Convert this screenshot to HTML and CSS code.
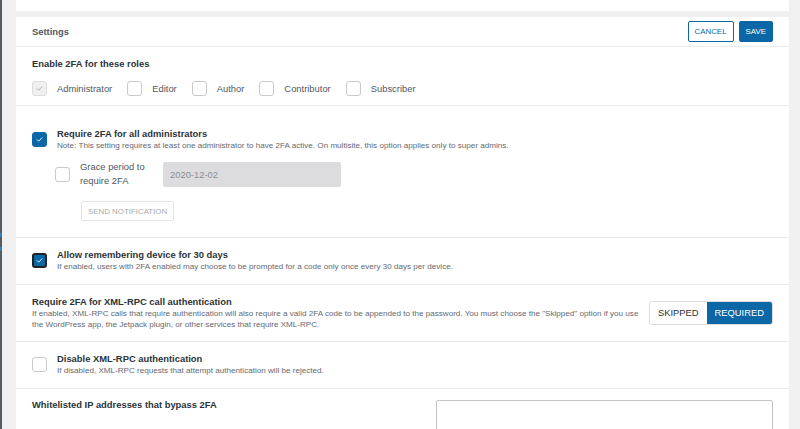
FILE: index.html
```html
<!DOCTYPE html>
<html lang="en">
<head>
<meta charset="utf-8">
<title>Settings</title>
<link rel="stylesheet" href="styles.css">
</head>
<body>
<div class="frame">
  <div class="edge"></div>
  <main class="main">
    <div class="card card-top"></div>
    <div class="card settings">
      <header class="head">
        <span class="head-title">Settings</span>
        <div class="actions">
          <button class="btn btn-outline">Cancel</button>
          <button class="btn btn-primary">Save</button>
        </div>
      </header>

      <section class="sec roles">
        <div class="title">Enable 2FA for these roles</div>
        <div class="role-list">
          <label class="role"><span class="cb cb-disabled"><svg viewBox="0 0 16 16"><path d="M4.5 8.2l2.3 2.3 4.7-5"/></svg></span>Administrator</label>
          <label class="role"><span class="cb"></span>Editor</label>
          <label class="role"><span class="cb"></span>Author</label>
          <label class="role"><span class="cb"></span>Contributor</label>
          <label class="role"><span class="cb"></span>Subscriber</label>
        </div>
      </section>

      <section class="sec admin">
        <div class="opt">
          <span class="cb cb-on"><svg viewBox="0 0 16 16"><path d="M4.5 8.2l2.3 2.3 4.7-5"/></svg></span>
          <div class="opt-text">
            <div class="title">Require 2FA for all administrators</div>
            <div class="desc">Note: This setting requires at least one administrator to have 2FA active. On multisite, this option applies only to super admins.</div>
          </div>
        </div>
        <div class="grace">
          <span class="cb"></span>
          <span class="grace-label">Grace period to<br>require 2FA</span>
          <div class="date-input">2020-12-02</div>
        </div>
        <button class="btn btn-muted">Send notification</button>
      </section>

      <section class="sec">
        <div class="opt">
          <span class="cb cb-on cb-focus"><svg viewBox="0 0 16 16"><path d="M4.5 8.2l2.3 2.3 4.7-5"/></svg></span>
          <div class="opt-text">
            <div class="title">Allow remembering device for 30 days</div>
            <div class="desc">If enabled, users with 2FA enabled may choose to be prompted for a code only once every 30 days per device.</div>
          </div>
        </div>
      </section>

      <section class="sec xmlrpc">
        <div class="opt-text">
          <div class="title">Require 2FA for XML-RPC call authentication</div>
          <div class="desc desc-wrap">If enabled, XML-RPC calls that require authentication will also require a valid 2FA code to be appended to the password. You must choose the "Skipped" option if you use the WordPress app, the Jetpack plugin, or other services that require XML-RPC.</div>
        </div>
        <div class="toggle">
          <span class="seg">SKIPPED</span>
          <span class="seg seg-on">REQUIRED</span>
        </div>
      </section>

      <section class="sec">
        <div class="opt">
          <span class="cb"></span>
          <div class="opt-text">
            <div class="title">Disable XML-RPC authentication</div>
            <div class="desc">If disabled, XML-RPC requests that attempt authentication will be rejected.</div>
          </div>
        </div>
      </section>

      <section class="sec whitelist">
        <div class="title">Whitelisted IP addresses that bypass 2FA</div>
        <div class="textarea"></div>
      </section>
    </div>
  </main>
</div>
</body>
</html>
```

FILE: styles.css
```css
* { box-sizing: border-box; }

html, body {
  margin: 0;
  height: 100%;
  overflow: hidden;
}

body {
  background: #f0f0f1;
  font-family: "Liberation Sans", Arial, sans-serif;
  color: #50575e;
}

.frame {
  display: flex;
  min-height: 100%;
}

.edge {
  width: 2px;
  flex: none;
  background: linear-gradient(to bottom, #555b61 0, #555b61 233px, #2f7fc1 233px, #2f7fc1 237px, #555b61 237px, #555b61 247px, #2f7fc1 247px, #2f7fc1 251px, #555b61 251px);
}

.main {
  flex: 1;
  padding: 0 11px 0 14px;
}

.card {
  background: #fff;
}

.card-top {
  height: 11px;
  margin-bottom: 6px;
}

.head {
  height: 30px;
  display: flex;
  align-items: center;
  justify-content: space-between;
  padding: 0 16px;
  border-bottom: 1px solid #ebebeb;
}

.head-title {
  font-size: 9.4px;
  font-weight: bold;
  color: #50575e;
}

.actions {
  display: flex;
  gap: 5px;
}

.btn {
  font-family: inherit;
  text-transform: uppercase;
  font-size: 7.9px;
  border-radius: 2px;
  height: 21px;
  padding: 0 6px;
  cursor: pointer;
}

.btn-outline {
  background: #fff;
  color: #0b67a5;
  border: 1px solid #0b67a5;
}

.btn-primary {
  background: #0b67a5;
  color: #fff;
  border: 1px solid #0b67a5;
}

.btn-muted {
  background: #fff;
  color: #a7aaad;
  border: 1px solid #e4e4e4;
  height: 20px;
  padding: 0 6px;
  margin: 13px 0 0 49px;
}

.sec {
  padding: 10px 16px 11px;
  border-bottom: 1px solid #ebebeb;
}

.title {
  font-size: 9.4px;
  font-weight: bold;
  line-height: 13px;
  color: #2c3338;
}

.desc {
  font-size: 8.1px;
  line-height: 12px;
  color: #646970;
}

.desc-wrap {
  line-height: 11px;
}

.roles {
  padding-bottom: 9px;
}

.role-list {
  display: flex;
  margin-top: 11px;
}

.role {
  display: flex;
  align-items: center;
  gap: 10px;
  margin-right: 15px;
  font-size: 9.4px;
  color: #50575e;
}

.cb {
  width: 15px;
  height: 15px;
  flex: none;
  border: 1px solid #c9cacc;
  border-radius: 3px;
  background: #fff;
  display: flex;
  align-items: center;
  justify-content: center;
}

.cb svg {
  width: 11px;
  height: 11px;
  fill: none;
  stroke: #fff;
  stroke-width: 1.3;
  stroke-linecap: round;
  stroke-linejoin: round;
}

.cb-disabled {
  background: #f0f0f1;
  border-color: #dcdcde;
}

.cb-disabled svg {
  stroke: #a7aaad;
}

.cb-on {
  background: #0b67a5;
  border-color: #0b67a5;
}

.cb-focus {
  border: 2px solid #1d2327;
}

.opt {
  display: flex;
  align-items: center;
  gap: 10px;
}

.admin {
  padding-top: 21px;
  padding-bottom: 16px;
}

.grace {
  display: flex;
  align-items: center;
  margin: 8px 0 0 23px;
}

.grace-label {
  font-size: 9.4px;
  line-height: 14px;
  color: #50575e;
  margin-left: 10px;
  width: 83px;
}

.date-input {
  width: 178px;
  height: 25px;
  background: #dcdcde;
  border-radius: 2px;
  font-size: 9.4px;
  color: #8c8f94;
  display: flex;
  align-items: center;
  padding-left: 7px;
}

.xmlrpc {
  display: flex;
  align-items: center;
  gap: 8px;
}

.xmlrpc .opt-text {
  flex: 1;
}

.toggle {
  display: flex;
  flex: none;
  height: 24px;
  border: 1px solid #dcdcde;
  border-radius: 3px;
  overflow: hidden;
  font-size: 9.4px;
}

.seg {
  display: flex;
  align-items: center;
  padding: 0 8px;
  color: #2c3338;
  background: #fff;
}

.seg-on {
  background: #0b67a5;
  color: #fff;
}

.whitelist {
  display: flex;
  justify-content: space-between;
  padding-top: 9px;
  border-bottom: none;
}

.textarea {
  width: 337px;
  height: 80px;
  margin-top: 2px;
  border: 1px solid #c3c4c7;
  border-radius: 2px;
  background: #fff;
}
```
